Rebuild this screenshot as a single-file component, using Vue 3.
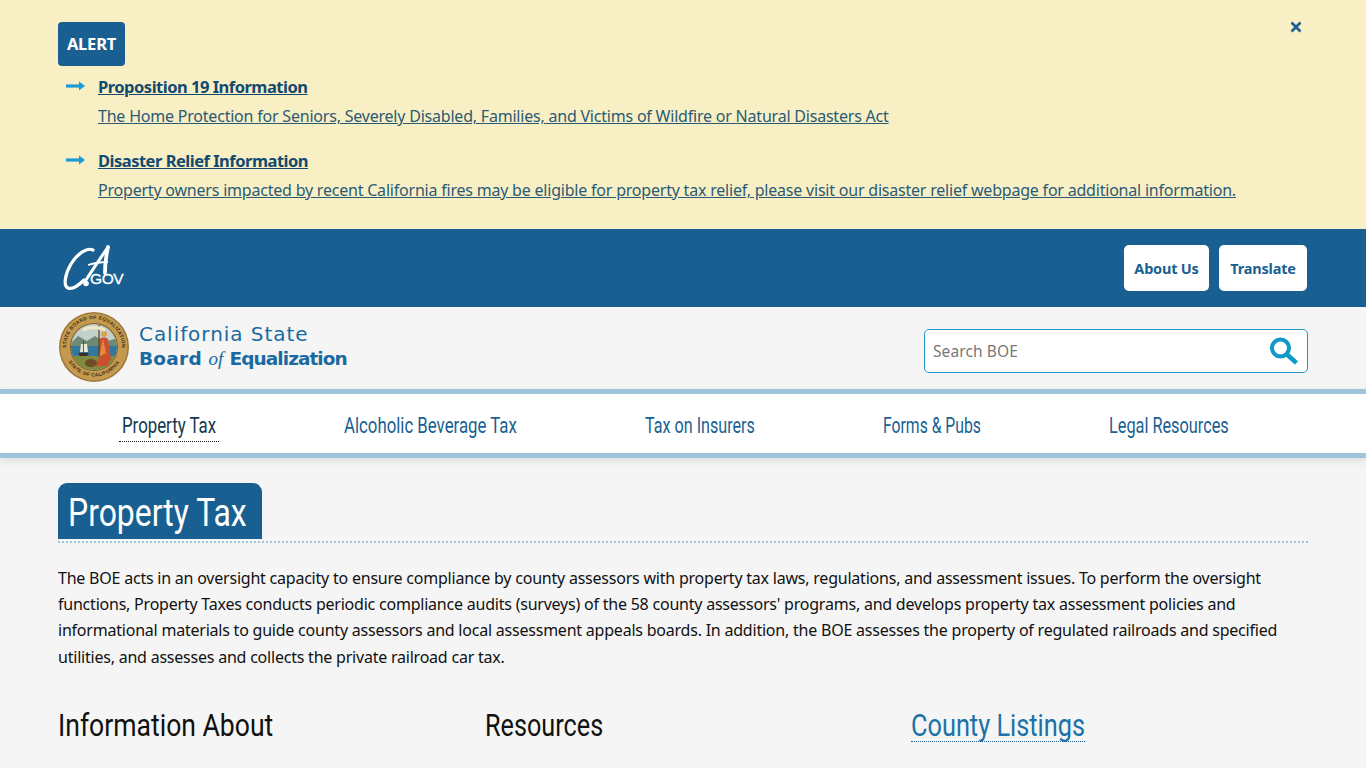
<script setup>
const alerts = [
  { title: 'Proposition 19 Information', text: 'The Home Protection for Seniors, Severely Disabled, Families, and Victims of Wildfire or Natural Disasters Act' },
  { title: 'Disaster Relief Information', text: 'Property owners impacted by recent California fires may be eligible for property tax relief, please visit our disaster relief webpage for additional information.' }
]
const nav = [
  { label: 'Property Tax', width: 94 },
  { label: 'Alcoholic Beverage Tax', width: 172.5 },
  { label: 'Tax on Insurers', width: 110 },
  { label: 'Forms & Pubs', width: 98 },
  { label: 'Legal Resources', width: 120 }
]
const lines = [
  'The BOE acts in an oversight capacity to ensure compliance by county assessors with property tax laws, regulations, and assessment issues. To perform the oversight',
  "functions, Property Taxes conducts periodic compliance audits (surveys) of the 58 county assessors' programs, and develops property tax assessment policies and",
  'informational materials to guide county assessors and local assessment appeals boards. In addition, the BOE assesses the property of regulated railroads and specified',
  'utilities, and assesses and collects the private railroad car tax.'
]
// Condensed look: no condensed family is installed, so squeeze each label to its box.
const vFit = {
  mounted(el) {
    const inner = el.firstElementChild
    inner.style.transform = `scaleX(${el.getBoundingClientRect().width / inner.offsetWidth})`
  }
}
</script>

<template>
  <div class="page">
    <section class="alert">
      <span class="badge">ALERT</span>
      <button class="close" aria-label="Close">
        <svg width="12" height="12" viewBox="0 0 12 12"><path d="M1.5 1.5l9 9M10.5 1.5l-9 9" stroke="#1a5f91" stroke-width="2.6" fill="none"/></svg>
      </button>
      <ul class="alert-list">
        <li v-for="a in alerts" :key="a.title" class="alert-item">
          <svg class="arrow" width="19" height="10" viewBox="0 0 19 10"><path d="M0 5h14" stroke="#1a9ad6" stroke-width="3.200"/><path d="M13 0.5l6 4.500-6 4.500z" fill="#1a9ad6"/></svg>
          <div>
            <a class="alert-title">{{ a.title }}</a>
            <a class="alert-text">{{ a.text }}</a>
          </div>
        </li>
      </ul>
    </section>

    <header class="top">
      <svg class="cagov-mark" width="50" height="50" viewBox="0 0 50 50" fill="none">
        <path d="M33 6C27 3 17 10 11 20C5 30 3 42 8 44C13 46 19 41 24 36" stroke="#fff" stroke-width="3.200" stroke-linecap="round"/>
        <path d="M48 3C42 12 33 25 26 36" stroke="#fff" stroke-width="3" stroke-linecap="round"/>
        <path d="M48 3C46 12 45 22 45 29" stroke="#fff" stroke-width="3.800" stroke-linecap="round"/>
        <path d="M28 21C34 19 42 18 48 18" stroke="#fff" stroke-width="1.800"/>
        <circle cx="26" cy="39.500" r="2.800" fill="#fff"/>
      </svg>
      <span class="cagov-text">GOV</span>
      <div class="top-btns">
        <a class="top-btn about">About Us</a>
        <a class="top-btn translate">Translate</a>
      </div>
    </header>

    <div class="brand-row">
      <svg class="seal" width="72" height="72" viewBox="0 0 72 72">
        <defs>
          <path id="sealTop" d="M8 36a28 28 0 0 1 56 0"/>
          <path id="sealBottom" d="M6.500 36a29.500 29.500 0 0 0 59 0"/>
          <clipPath id="sealIn"><circle cx="36" cy="36" r="23"/></clipPath>
        </defs>
        <circle cx="36" cy="36" r="35" fill="#9c7838"/>
        <circle cx="36" cy="36" r="33.500" fill="#c49a50"/>
        <circle cx="36" cy="36" r="24" fill="#7d5f2e"/>
        <text class="seal-t"><textPath href="#sealTop" startOffset="50%" text-anchor="middle">STATE BOARD OF EQUALIZATION</textPath></text>
        <text class="seal-t"><textPath href="#sealBottom" startOffset="50%" text-anchor="middle">STATE OF CALIFORNIA</textPath></text>
        <g clip-path="url(#sealIn)">
          <rect x="12" y="12" width="48" height="48" fill="#c4d0cc"/>
          <path d="M12 33l8-8 9 5 8-5 9 6 14-4v10H12z" fill="#6f8a72"/>
          <rect x="12" y="35" width="48" height="10" fill="#34779c"/>
          <rect x="12" y="45" width="48" height="15" fill="#7f8a3f"/>
          <path d="M20 42h11l-2 3h-7z" fill="#3c3026"/>
          <path d="M23 33h6l1 8h-8z" fill="#eee8d6"/><path d="M25.500 30v12" stroke="#3c3026" stroke-width=".8"/>
          <circle cx="46" cy="23" r="3" fill="#d8a24a"/>
          <path d="M41 28c3-2 7-2 9 0l3 20-4 7H37l5-10z" fill="#c9502f"/>
          <path d="M45 28l3 14-7 4z" fill="#e58a3c"/>
          <path d="M41 14v32" stroke="#5f4020" stroke-width="1.200"/>
          <ellipse cx="33" cy="52" rx="6" ry="4" fill="#6d4c26"/>
        </g>
        <path d="M25 19q11-5 22 0" stroke="#efe7c6" stroke-width="3.500" fill="none"/>
      </svg>
      <div class="brand-text">
        <div class="brand-1">California State</div>
        <div class="brand-2"><span class="w-board">Board</span> <i>of</i> <span class="w-eq">Equalization</span></div>
      </div>
      <div class="search">
        <span class="placeholder">Search BOE</span>
        <svg width="30" height="28" viewBox="0 0 30 28" fill="none"><circle cx="11.500" cy="11" r="8.500" stroke="#0f9ac9" stroke-width="4"/><path d="M18 17.500l9.500 8.500" stroke="#0f9ac9" stroke-width="4.500"/></svg>
      </div>
    </div>

    <nav class="nav">
      <a v-for="(n, i) in nav" :key="n.label" v-fit class="nav-link" :class="{ active: i === 0 }" :style="{ width: n.width + 'px' }"><span class="squeeze">{{ n.label }}</span></a>
    </nav>

    <main class="main">
      <div class="title-wrap"><h1 class="title"><span v-fit class="title-box"><span class="squeeze">Property Tax</span></span></h1></div>
      <p class="intro"><span v-for="l in lines" :key="l" class="line">{{ l }}</span></p>
      <div class="cols">
        <h2><span v-fit class="h-box h-info"><span class="squeeze">Information About</span></span></h2>
        <h2><span v-fit class="h-box h-res"><span class="squeeze">Resources</span></span></h2>
        <h2><a v-fit class="h-box h-county link"><span class="squeeze">County Listings</span></a></h2>
      </div>
    </main>
  </div>
</template>

<style>
html, body { margin: 0; height: 768px; overflow: hidden; }
</style>

<style scoped>
.page { width: 1366px; height: 768px; overflow: hidden; background: #f5f5f5; font-family: "Noto Sans", sans-serif; color: #111; }
.alert { position: relative; height: 229px; box-sizing: border-box; background: #f8f0c4; padding: 22px 58px 0; }
.badge { display: block; width: 67px; height: 44px; box-sizing: border-box; background: #1a5f91; border-radius: 4px; color: #fff; font-weight: 700; font-size: 16.500px; line-height: 44px; text-align: center; letter-spacing: -0.2px; }
.close { position: absolute; left: 1290px; top: 21px; padding: 0; width: 12px; height: 12px; border: 0; background: none; display: block; line-height: 0; }
.alert-list { list-style: none; margin: 6px 0 0; padding: 0 0 0 8px; }
.alert-item { display: flex; gap: 13px; height: 74px; }
.arrow { margin-top: 9px; flex: none; }
.alert-title, .alert-text { display: block; width: max-content; text-decoration: underline; color: #134a70; }
.alert-title { font-weight: 700; font-size: 16.500px; line-height: 29px; letter-spacing: -0.5px; }
.alert-text { font-size: 16px; line-height: 29px; letter-spacing: -0.21px; color: #2b5a75; margin-top: 0; position: relative; top: 1px; }
.top { height: 78px; background: #1a5f91; display: flex; align-items: center; position: relative; padding: 0 59px 0 64px; box-sizing: border-box; }
.cagov-mark { position: absolute; left: 60px; top: 15px; }
.cagov-text { position: absolute; left: 90px; top: 41px; color: #fff; font-family: "Liberation Sans", sans-serif; font-size: 15.500px; line-height: 18px; letter-spacing: -0.4px; -webkit-text-stroke: .3px #fff; }
.top-btns { margin-left: auto; display: flex; gap: 10px; }
.top-btn { display: block; height: 46px; background: #fff; border-radius: 5px; color: #1a5f91; font-weight: 700; font-size: 14.500px; line-height: 46px; text-align: center; letter-spacing: -0.2px; }
.about { width: 85px; }
.translate { width: 88px; }
.brand-row { height: 82px; box-sizing: border-box; display: flex; align-items: center; padding: 0 58px; }
.seal { flex: none; margin-top: -2px; }
.seal-t { font: 700 4.800px "Liberation Sans", sans-serif; fill: #3a2a12; letter-spacing: .4px; }
.brand-text { margin-left: 9px; color: #1a6a9f; font-family: "DejaVu Sans", sans-serif; margin-top: -4px; }
.brand-1 { font-size: 20px; line-height: 26px; letter-spacing: .95px; font-weight: 400; }
.brand-2 { font-size: 18.500px; line-height: 24px; font-weight: 700; white-space: nowrap; }
.w-board { letter-spacing: .25px; }
.w-eq { letter-spacing: -.95px; }
.brand-2 i { font-family: "Liberation Serif", serif; font-weight: 400; font-size: 19px; margin: 0 0 0 0; }
.search { margin-left: auto; width: 384px; height: 44px; box-sizing: border-box; margin-top: 6px; background: #fff; border: 1px solid #1f98c9; border-radius: 5px; display: flex; align-items: center; justify-content: space-between; padding: 0 8px; }
.placeholder { color: #777; font-size: 15.500px; letter-spacing: 0.1px; }
.squeeze { display: inline-block; white-space: nowrap; transform-origin: left center; font-family: Roboto, sans-serif; }
.nav { height: 69px; box-sizing: border-box; background: #fff; border-top: 5px solid #9fc5dd; border-bottom: 5px solid #9fc5dd; box-shadow: 0 3px 8px rgba(0,0,0,.1); display: flex; gap: 128px; padding-left: 122px; position: relative; align-items: center; }
.nav-link { display: block; flex: none; font-size: 22px; color: #1a5f91; line-height: 28px; position: relative; top: 1px; }
.active { color: #12384f; }
.active::after { content: ""; position: absolute; left: -3px; right: -3px; bottom: -2px; border-bottom: 1px dotted #111; }
.main { padding: 25px 58px 0; }
.title-wrap { border-bottom: 2px dotted #9fc5dd; height: 60px; box-sizing: border-box; }
.title { display: inline-block; margin: 0; height: 56px; box-sizing: border-box; background: #1a5f91; color: #fff; border-radius: 9px 9px 0 0; padding: 0 15px 0 10px; font-weight: 400; font-size: 38px; line-height: 57px; }
.title-box { display: block; width: 179px; }
.intro { margin: 22px 0 0; font-size: 16px; line-height: 26.200px; letter-spacing: -0.22px; color: #111; }
.line { display: block; white-space: nowrap; }
.cols { display: grid; grid-template-columns: repeat(3, 1fr); gap: 30px; margin-top: 39px; }
.cols h2 { margin: 0; font-weight: 400; font-size: 31px; line-height: 31px; color: #111; }
.h-box { display: block; }
.h-info { width: 215px; }
.h-res { width: 118px; }
.h-county { width: 174px; }
.link { color: #1a72a8; border-bottom: 1px dotted #1a5f91; }
</style>
